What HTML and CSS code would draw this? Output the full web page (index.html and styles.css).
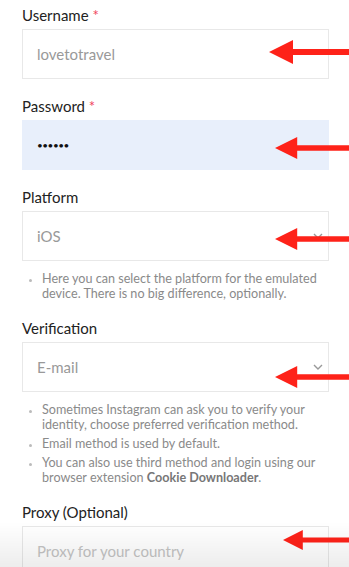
FILE: index.html
```html
<!DOCTYPE html>
<html lang="en">

<head>
  <meta charset="UTF-8" />
  <meta name="viewport" content="width=device-width, initial-scale=1.0" />
  <title>Login</title>
  <link rel="stylesheet" href="styles.css">
</head>

<body>
  <form class="container">
    <div class="field">
      <label for="username">Username <span class="req">*</span></label>
      <div class="control">
        <input type="text" id="username" value="lovetotravel" />
        <svg class="arrow arrow-user" width="80" height="26" viewBox="0 0 80 26"><path d="M0 13 L24 1 L24 10 L80 10 L80 16 L24 16 L24 25 Z" /></svg>
      </div>
    </div>

    <div class="field">
      <label for="password">Password <span class="req">*</span></label>
      <div class="control">
        <input type="password" id="password" class="filled" value="secret" />
        <svg class="arrow arrow-pass" width="80" height="26" viewBox="0 0 80 26"><path d="M0 13 L24 1 L24 10 L80 10 L80 16 L24 16 L24 25 Z" /></svg>
      </div>
    </div>

    <div class="field">
      <label for="platform">Platform</label>
      <div class="control">
        <select id="platform">
          <option>iOS</option>
          <option>Android</option>
        </select>
        <svg class="chevron" width="10" height="6" viewBox="0 0 10 6"><path d="M1 1 L5 5 L9 1" fill="none" stroke="#999" stroke-width="1.4" /></svg>
        <svg class="arrow arrow-platform" width="80" height="26" viewBox="0 0 80 26"><path d="M0 13 L24 1 L24 10 L80 10 L80 16 L24 16 L24 25 Z" /></svg>
      </div>
      <ul class="help">
        <li>Here you can select the platform for the emulated device. There is no big difference, optionally.</li>
      </ul>
    </div>

    <div class="field">
      <label for="verification">Verification</label>
      <div class="control">
        <select id="verification">
          <option>E-mail</option>
          <option>SMS</option>
        </select>
        <svg class="chevron" width="10" height="6" viewBox="0 0 10 6"><path d="M1 1 L5 5 L9 1" fill="none" stroke="#999" stroke-width="1.4" /></svg>
        <svg class="arrow arrow-verify" width="80" height="26" viewBox="0 0 80 26"><path d="M0 13 L24 1 L24 10 L80 10 L80 16 L24 16 L24 25 Z" /></svg>
      </div>
      <ul class="help">
        <li>Sometimes Instagram can ask you to verify your identity, choose preferred verification method.</li>
        <li>Email method is used by default.</li>
        <li>You can also use third method and login using our browser extension <strong>Cookie Downloader</strong>.</li>
      </ul>
    </div>

    <div class="field">
      <label for="proxy">Proxy (Optional)</label>
      <div class="control">
        <input type="text" id="proxy" placeholder="Proxy for your country" />
        <svg class="arrow arrow-proxy" width="80" height="26" viewBox="0 0 80 26"><path d="M0 13 L24 1 L24 10 L80 10 L80 16 L24 16 L24 25 Z" /></svg>
      </div>
    </div>
  </form>

  <div class="fade"></div>
</body>

</html>
```

FILE: styles.css
```css
body {
  margin: 0;
  font-family: 'Lato', sans-serif;
  background: #ffffff;
  color: #222;
  overflow: hidden;
}

.container {
  padding: 5px 20px 0 22px;
}

.field {
  margin-bottom: 17px;
}

label {
  display: block;
  font-size: 15px;
  line-height: 20px;
  margin-bottom: 4px;
  color: #222;
}

.req {
  color: #f0435a;
}

.control {
  position: relative;
}

input,
select {
  display: block;
  width: 100%;
  height: 50px;
  box-sizing: border-box;
  padding: 0 14px;
  border: 1px solid #e8e8e8;
  border-radius: 0;
  background: #fff;
  font-family: 'Lato', sans-serif;
  font-size: 15px;
  color: #999;
  outline: none;
  -webkit-appearance: none;
  appearance: none;
}

input.filled {
  background: #e8effb;
  border-color: #e8effb;
  color: #111;
  font-size: 10px;
  letter-spacing: -0.5px;
}

input::placeholder {
  color: #c4c4c4;
}

.chevron {
  position: absolute;
  right: 6px;
  top: 22px;
}

.arrow {
  position: absolute;
  right: -20px;
  fill: #fe2219;
}

.arrow-user {
  top: 10px;
  width: 80px;
}

.arrow-pass {
  top: 15px;
  width: 74px;
}

.arrow-platform {
  top: 15px;
  width: 74px;
}

.arrow-verify {
  top: 22px;
  width: 74px;
}

.arrow-proxy {
  top: 1px;
  width: 66px;
}

.help {
  margin: 10px 0 0;
  padding: 0 0 0 20px;
  font-size: 12.6px;
  line-height: 15px;
  color: #8a8a8a;
}

.help li {
  margin-bottom: 4px;
}

.help li:last-child {
  margin-bottom: 0;
}

.help li::marker {
  color: #bbb;
  font-size: 10px;
}

.help strong {
  color: #777;
}

.fade {
  position: fixed;
  left: 0;
  right: 0;
  bottom: 0;
  height: 45px;
  background: linear-gradient(rgba(0, 0, 0, 0), rgba(0, 0, 0, 0.07));
  pointer-events: none;
}
```
